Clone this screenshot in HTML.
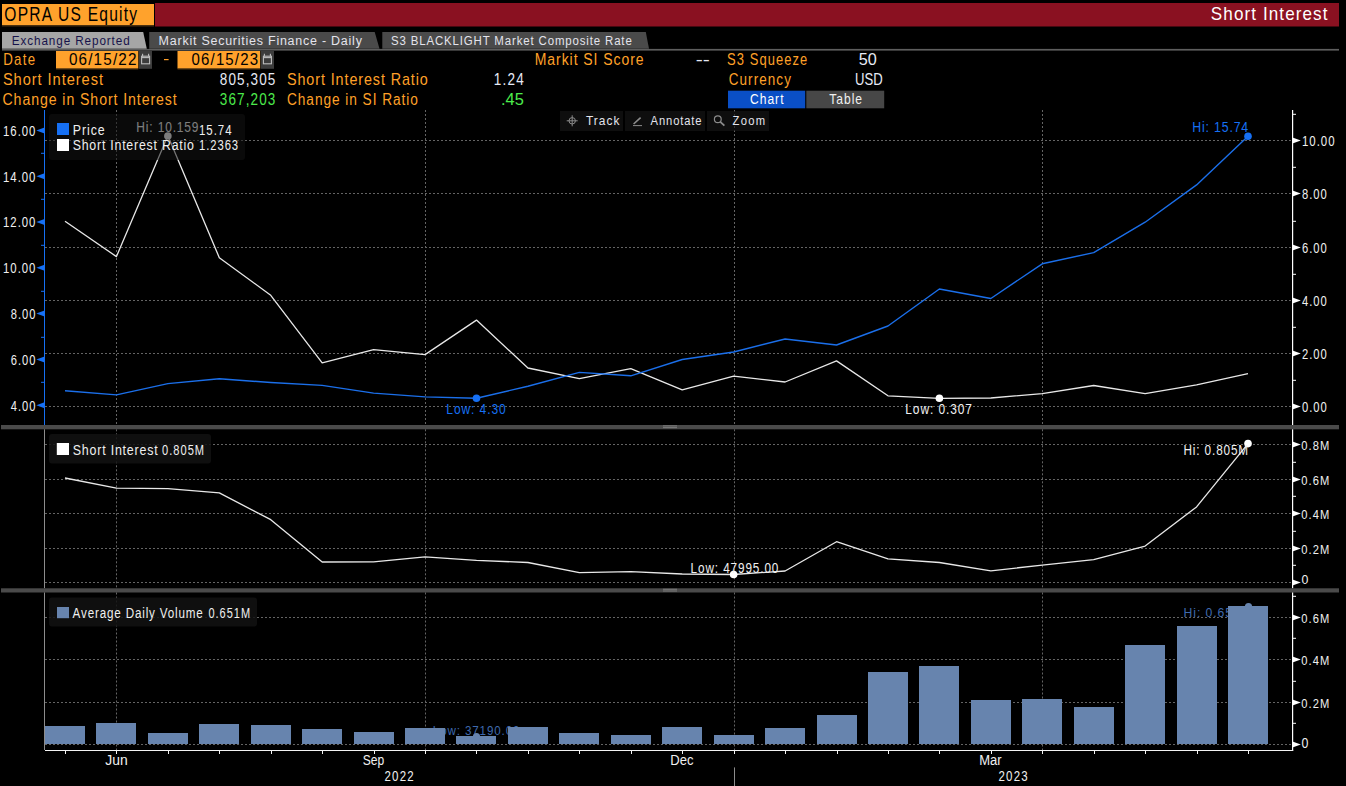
<!DOCTYPE html>
<html><head><meta charset="utf-8"><style>
html,body{margin:0;padding:0;background:#000;width:1346px;height:786px;overflow:hidden}
svg{display:block}
text{font-family:"Liberation Sans", sans-serif;white-space:pre}
</style></head><body>
<svg width="1346" height="786" viewBox="0 0 1346 786">
<rect width="1346" height="786" fill="#000"/>
<rect x="2.00" y="4.00" width="152.00" height="21.00" fill="#FFA22C" />
<rect x="2.00" y="25.00" width="152.00" height="1.50" fill="#4a3010" />
<rect x="155.00" y="3.00" width="1184.00" height="23.50" fill="#8A1121" />
<text transform="translate(4.30,20.80) scale(1,1.2785)" x="0" y="0" font-size="15.57" fill="#000" textLength="132.79" lengthAdjust="spacing" >OPRA US Equity</text>
<text transform="translate(1210.86,19.70) scale(1,1.1055)" x="0" y="0" font-size="17.09" fill="#FFFFFF" textLength="116.59" lengthAdjust="spacing" >Short Interest</text>
<polygon points="2,32 143.2,32 146.8,48.7 2,48.7" fill="#A6A6A6"/>
<polygon points="149.2,32 374.7,32 379.5,48.7 149.2,48.7" fill="#4A4A4A"/>
<polygon points="382.3,32 645.8,32 649,48.7 382.3,48.7" fill="#4A4A4A"/>
<rect x="2.00" y="48.90" width="1337.00" height="1.70" fill="#5E5E5E" />
<text transform="translate(11.82,44.90) scale(1,1.1521)" x="0" y="0" font-size="11.73" fill="#16124A" textLength="117.85" lengthAdjust="spacing" >Exchange Reported</text>
<text transform="translate(158.62,44.90) scale(1,1.0836)" x="0" y="0" font-size="12.48" fill="#E4E4EC" textLength="203.25" lengthAdjust="spacing" >Markit Securities Finance - Daily</text>
<text transform="translate(390.92,44.90) scale(1,1.1792)" x="0" y="0" font-size="11.46" fill="#E4E4EC" textLength="240.85" lengthAdjust="spacing" >S3 BLACKLIGHT Market Composite Rate</text>
<text transform="translate(3.20,64.70) scale(1,1.2031)" x="0" y="0" font-size="13.29" fill="#FFA028" textLength="31.90" lengthAdjust="spacing" >Date</text>
<rect x="56.00" y="51.00" width="82.30" height="17.60" fill="#FFA22C" />
<rect x="56.00" y="68.60" width="82.30" height="1.00" fill="#4a3010" />
<text transform="translate(68.90,64.70) scale(1,1.0462)" x="0" y="0" font-size="15.28" fill="#000" textLength="67.60" lengthAdjust="spacing" >06/15/22</text>
<rect x="139.00" y="51.00" width="13.00" height="17.80" fill="#3C3C3C" />
<rect x="164.00" y="59.00" width="4.60" height="1.20" fill="#FFA028" />
<rect x="177.50" y="51.00" width="82.70" height="17.60" fill="#FFA22C" />
<rect x="177.50" y="68.60" width="82.70" height="1.00" fill="#4a3010" />
<text transform="translate(191.60,64.70) scale(1,1.0651)" x="0" y="0" font-size="15.01" fill="#000" textLength="66.40" lengthAdjust="spacing" >06/15/23</text>
<rect x="260.80" y="51.00" width="13.20" height="17.80" fill="#3C3C3C" />
<g fill="none" stroke="#BDBDBD" stroke-width="1.1"><rect x="141.60" y="56.2" width="8" height="7.6"/><line x1="141.60" y1="57.6" x2="149.60" y2="57.6"/><line x1="142.60" y1="53.8" x2="142.60" y2="56.5"/><line x1="148.60" y1="53.8" x2="148.60" y2="56.5"/></g>
<g fill="none" stroke="#BDBDBD" stroke-width="1.1"><rect x="263.40" y="56.2" width="8" height="7.6"/><line x1="263.40" y1="57.6" x2="271.40" y2="57.6"/><line x1="264.40" y1="53.8" x2="264.40" y2="56.5"/><line x1="270.40" y1="53.8" x2="270.40" y2="56.5"/></g>
<text transform="translate(2.90,84.80) scale(1,1.0896)" x="0" y="0" font-size="14.67" fill="#FFA028" textLength="100.10" lengthAdjust="spacing" >Short Interest</text>
<text transform="translate(219.80,84.80) scale(1,1.1812)" x="0" y="0" font-size="13.54" fill="#E6EAF6" textLength="55.60" lengthAdjust="spacing" >805,305</text>
<text transform="translate(2.50,104.60) scale(1,1.1299)" x="0" y="0" font-size="14.15" fill="#FFA028" textLength="174.30" lengthAdjust="spacing" >Change in Short Interest</text>
<text transform="translate(219.80,104.60) scale(1,1.1812)" x="0" y="0" font-size="13.54" fill="#4CEB4C" textLength="55.60" lengthAdjust="spacing" >367,203</text>
<text transform="translate(287.00,84.80) scale(1,1.1117)" x="0" y="0" font-size="14.38" fill="#FFA028" textLength="140.80" lengthAdjust="spacing" >Short Interest Ratio</text>
<text transform="translate(493.80,84.80) scale(1,1.1788)" x="0" y="0" font-size="13.56" fill="#E6EAF6" textLength="30.00" lengthAdjust="spacing" >1.24</text>
<text transform="translate(287.00,104.60) scale(1,1.1651)" x="0" y="0" font-size="13.72" fill="#FFA028" textLength="130.90" lengthAdjust="spacing" >Change in SI Ratio</text>
<text x="501.00" y="104.60" font-size="15.99" fill="#4CEB4C" textLength="22.80" lengthAdjust="spacingAndGlyphs" >.45</text>
<text transform="translate(534.70,64.70) scale(1,1.1403)" x="0" y="0" font-size="14.02" fill="#FFA028" textLength="108.90" lengthAdjust="spacing" >Markit SI Score</text>
<text x="695.70" y="64.70" font-size="15.99" fill="#E6EAF6" textLength="14.10" lengthAdjust="spacingAndGlyphs" >--</text>
<text transform="translate(727.00,64.70) scale(1,1.2329)" x="0" y="0" font-size="12.97" fill="#FFA028" textLength="80.30" lengthAdjust="spacing" >S3 Squeeze</text>
<text x="858.80" y="64.70" font-size="15.99" fill="#E6EAF6" textLength="18.00" lengthAdjust="spacingAndGlyphs" >50</text>
<text transform="translate(728.70,84.80) scale(1,1.1850)" x="0" y="0" font-size="13.49" fill="#FFA028" textLength="62.20" lengthAdjust="spacing" >Currency</text>
<text x="855.00" y="84.80" font-size="15.99" fill="#E6EAF6" textLength="27.70" lengthAdjust="spacingAndGlyphs" >USD</text>
<rect x="728.00" y="90.70" width="77.20" height="17.60" fill="#0A4FC6" />
<rect x="806.30" y="90.70" width="77.90" height="17.60" fill="#474747" />
<text transform="translate(750.01,103.70) scale(1,1.1460)" x="0" y="0" font-size="12.05" fill="#FFFFFF" textLength="33.48" lengthAdjust="spacing" >Chart</text>
<text transform="translate(829.21,103.70) scale(1,1.1408)" x="0" y="0" font-size="12.10" fill="#F0F0F0" textLength="32.88" lengthAdjust="spacing" >Table</text>
<line x1="45" y1="140.5" x2="1292" y2="140.5" stroke="#646464" stroke-width="1" stroke-dasharray="2,2"/>
<line x1="45" y1="193.5" x2="1292" y2="193.5" stroke="#646464" stroke-width="1" stroke-dasharray="2,2"/>
<line x1="45" y1="247.5" x2="1292" y2="247.5" stroke="#646464" stroke-width="1" stroke-dasharray="2,2"/>
<line x1="45" y1="300.5" x2="1292" y2="300.5" stroke="#646464" stroke-width="1" stroke-dasharray="2,2"/>
<line x1="45" y1="353.5" x2="1292" y2="353.5" stroke="#646464" stroke-width="1" stroke-dasharray="2,2"/>
<line x1="45" y1="406.5" x2="1292" y2="406.5" stroke="#646464" stroke-width="1" stroke-dasharray="2,2"/>
<line x1="116.5" y1="110" x2="116.5" y2="425" stroke="#646464" stroke-width="1" stroke-dasharray="2,2"/>
<line x1="425.5" y1="110" x2="425.5" y2="425" stroke="#646464" stroke-width="1" stroke-dasharray="2,2"/>
<line x1="734.5" y1="110" x2="734.5" y2="425" stroke="#646464" stroke-width="1" stroke-dasharray="2,2"/>
<line x1="1042.5" y1="110" x2="1042.5" y2="425" stroke="#646464" stroke-width="1" stroke-dasharray="2,2"/>
<rect x="560.00" y="111.00" width="63.00" height="20.00" fill="#161616" fill-opacity="0.65"/>
<rect x="625.00" y="111.00" width="80.00" height="20.00" fill="#161616" fill-opacity="0.65"/>
<rect x="707.00" y="111.00" width="62.00" height="20.00" fill="#161616" fill-opacity="0.65"/>
<text transform="translate(586.02,125.10) scale(1,1.1460)" x="0" y="0" font-size="11.92" fill="#E4E4EC" textLength="33.37" lengthAdjust="spacing" >Track</text>
<text transform="translate(650.62,125.10) scale(1,1.2196)" x="0" y="0" font-size="11.20" fill="#E4E4EC" textLength="50.97" lengthAdjust="spacing" >Annotate</text>
<text transform="translate(732.52,125.10) scale(1,1.2149)" x="0" y="0" font-size="11.25" fill="#E4E4EC" textLength="32.67" lengthAdjust="spacing" >Zoom</text>
<g fill="none" stroke="#8C8C8C" stroke-width="1"><circle cx="572.2" cy="120.8" r="3.2"/><line x1="572.2" y1="115.3" x2="572.2" y2="126.3"/><line x1="566.7" y1="120.8" x2="577.7" y2="120.8"/><line x1="633.6" y1="124.0" x2="640.6" y2="117.6" stroke-width="1.6"/><line x1="633" y1="125.6" x2="642" y2="125.6"/><circle cx="717.8" cy="119.2" r="3.4" stroke-width="1.2"/><line x1="720.3" y1="121.8" x2="724.4" y2="125.6" stroke-width="1.8"/></g>
<polyline points="65.00,221.20 116.44,256.60 167.87,135.80 219.31,257.70 270.74,295.30 322.18,362.90 373.61,349.70 425.05,354.60 476.48,320.10 527.91,368.00 579.35,378.70 630.79,368.70 682.22,389.80 733.65,376.20 785.09,382.00 836.53,360.90 887.96,395.80 939.39,398.30 990.83,398.00 1042.27,393.60 1093.70,385.50 1145.13,393.70 1196.57,384.80 1248.01,373.60" fill="none" stroke="#E8E8E8" stroke-width="1.3" stroke-linejoin="round"/>
<polyline points="65.00,390.80 116.44,394.90 167.87,383.60 219.31,378.80 270.74,382.50 322.18,385.40 373.61,393.10 425.05,396.90 476.48,398.30 527.91,386.20 579.35,372.40 630.79,375.80 682.22,359.50 733.65,352.00 785.09,339.00 836.53,345.00 887.96,326.00 939.39,289.00 990.83,298.50 1042.27,263.80 1093.70,252.60 1145.13,222.20 1196.57,184.90 1248.01,136.30" fill="none" stroke="#1B6FEA" stroke-width="1.4" stroke-linejoin="round"/>
<circle cx="1248.01" cy="136.3" r="3.8" fill="#1670F4"/>
<circle cx="476.48" cy="398.3" r="3.8" fill="#1670F4"/>
<circle cx="939.39" cy="398.2" r="3.8" fill="#FFFFFF"/>
<circle cx="167.87" cy="136" r="3.8" fill="#FFFFFF"/>
<text transform="translate(1192.31,131.90) scale(1,1.1239)" x="0" y="0" font-size="12.29" fill="#1670F4" textLength="55.88" lengthAdjust="spacing" >Hi: 15.74</text>
<text transform="translate(446.31,413.60) scale(1,1.1459)" x="0" y="0" font-size="12.05" fill="#1670F4" textLength="59.38" lengthAdjust="spacing" >Low: 4.30</text>
<text transform="translate(905.31,413.80) scale(1,1.1513)" x="0" y="0" font-size="11.99" fill="#F2F2F2" textLength="66.68" lengthAdjust="spacing" >Low: 0.307</text>
<text transform="translate(136.31,131.80) scale(1,1.1503)" x="0" y="0" font-size="12.00" fill="#FFFFFF" textLength="62.18" lengthAdjust="spacing" >Hi: 10.159</text>
<rect x="49" y="114" width="196" height="46" rx="3" fill="#121212" fill-opacity="0.55"/>
<rect x="57.00" y="123.00" width="12.00" height="12.00" fill="#1670F4" />
<rect x="57.00" y="139.00" width="12.00" height="12.00" fill="#FFFFFF" />
<text transform="translate(72.70,134.60) scale(1,1.1291)" x="0" y="0" font-size="12.36" fill="#F0F0F0" textLength="32.00" lengthAdjust="spacing" >Price</text>
<text transform="translate(199.00,134.60) scale(1,1.2173)" x="0" y="0" font-size="11.46" fill="#F0F0F0" textLength="32.60" lengthAdjust="spacing" >15.74</text>
<text transform="translate(72.70,150.30) scale(1,1.1272)" x="0" y="0" font-size="12.38" fill="#F0F0F0" textLength="121.20" lengthAdjust="spacing" >Short Interest Ratio</text>
<text transform="translate(199.00,150.30) scale(1,1.2405)" x="0" y="0" font-size="11.25" fill="#F0F0F0" textLength="39.10" lengthAdjust="spacing" >1.2363</text>
<rect x="44.00" y="110.00" width="1.00" height="315.00" fill="#1670F4" />
<rect x="1292.00" y="110.00" width="1.20" height="315.00" fill="#FFFFFF" />
<polygon points="36.3,130.50 44.5,127.50 44.5,133.50" fill="#1670F4"/>
<text transform="translate(3.07,135.90) scale(1,1.2775)" x="0" y="0" font-size="11.38" fill="#F0F0F0" textLength="32.35" lengthAdjust="spacing" >16.00</text>
<rect x="41.00" y="152.80" width="3.00" height="1.00" fill="#1670F4" />
<polygon points="36.3,176.28 44.5,173.28 44.5,179.28" fill="#1670F4"/>
<text transform="translate(3.07,181.68) scale(1,1.2775)" x="0" y="0" font-size="11.38" fill="#F0F0F0" textLength="32.35" lengthAdjust="spacing" >14.00</text>
<rect x="41.00" y="198.80" width="3.00" height="1.00" fill="#1670F4" />
<polygon points="36.3,222.06 44.5,219.06 44.5,225.06" fill="#1670F4"/>
<text transform="translate(3.07,227.46) scale(1,1.2775)" x="0" y="0" font-size="11.38" fill="#F0F0F0" textLength="32.35" lengthAdjust="spacing" >12.00</text>
<rect x="41.00" y="244.80" width="3.00" height="1.00" fill="#1670F4" />
<polygon points="36.3,267.84 44.5,264.84 44.5,270.84" fill="#1670F4"/>
<text transform="translate(3.07,273.24) scale(1,1.2775)" x="0" y="0" font-size="11.38" fill="#F0F0F0" textLength="32.35" lengthAdjust="spacing" >10.00</text>
<rect x="41.00" y="290.80" width="3.00" height="1.00" fill="#1670F4" />
<polygon points="36.3,313.62 44.5,310.62 44.5,316.62" fill="#1670F4"/>
<text transform="translate(10.77,319.02) scale(1,1.3039)" x="0" y="0" font-size="11.15" fill="#F0F0F0" textLength="24.65" lengthAdjust="spacing" >8.00</text>
<rect x="41.00" y="336.80" width="3.00" height="1.00" fill="#1670F4" />
<polygon points="36.3,359.40 44.5,356.40 44.5,362.40" fill="#1670F4"/>
<text transform="translate(10.77,364.80) scale(1,1.3039)" x="0" y="0" font-size="11.15" fill="#F0F0F0" textLength="24.65" lengthAdjust="spacing" >6.00</text>
<rect x="41.00" y="381.80" width="3.00" height="1.00" fill="#1670F4" />
<polygon points="36.3,405.18 44.5,402.18 44.5,408.18" fill="#1670F4"/>
<text transform="translate(10.77,410.58) scale(1,1.3039)" x="0" y="0" font-size="11.15" fill="#F0F0F0" textLength="24.65" lengthAdjust="spacing" >4.00</text>
<polygon points="1300.8,140.50 1292.5,137.50 1292.5,143.50" fill="#FFFFFF"/>
<text transform="translate(1301.99,145.90) scale(1,1.2416)" x="0" y="0" font-size="11.47" fill="#F0F0F0" textLength="32.62" lengthAdjust="spacing" >10.00</text>
<rect x="1293.00" y="113.80" width="3.00" height="1.00" fill="#FFFFFF" />
<polygon points="1300.8,193.50 1292.5,190.50 1292.5,196.50" fill="#FFFFFF"/>
<text transform="translate(1301.99,198.90) scale(1,1.2691)" x="0" y="0" font-size="11.22" fill="#F0F0F0" textLength="24.82" lengthAdjust="spacing" >8.00</text>
<rect x="1293.00" y="166.80" width="3.00" height="1.00" fill="#FFFFFF" />
<polygon points="1300.8,247.50 1292.5,244.50 1292.5,250.50" fill="#FFFFFF"/>
<text transform="translate(1301.99,252.90) scale(1,1.2691)" x="0" y="0" font-size="11.22" fill="#F0F0F0" textLength="24.82" lengthAdjust="spacing" >6.00</text>
<rect x="1293.00" y="220.80" width="3.00" height="1.00" fill="#FFFFFF" />
<polygon points="1300.8,300.50 1292.5,297.50 1292.5,303.50" fill="#FFFFFF"/>
<text transform="translate(1301.99,305.90) scale(1,1.2691)" x="0" y="0" font-size="11.22" fill="#F0F0F0" textLength="24.82" lengthAdjust="spacing" >4.00</text>
<rect x="1293.00" y="273.80" width="3.00" height="1.00" fill="#FFFFFF" />
<polygon points="1300.8,353.50 1292.5,350.50 1292.5,356.50" fill="#FFFFFF"/>
<text transform="translate(1301.99,358.90) scale(1,1.2691)" x="0" y="0" font-size="11.22" fill="#F0F0F0" textLength="24.82" lengthAdjust="spacing" >2.00</text>
<rect x="1293.00" y="326.80" width="3.00" height="1.00" fill="#FFFFFF" />
<polygon points="1300.8,406.50 1292.5,403.50 1292.5,409.50" fill="#FFFFFF"/>
<text transform="translate(1301.99,411.90) scale(1,1.2691)" x="0" y="0" font-size="11.22" fill="#F0F0F0" textLength="24.82" lengthAdjust="spacing" >0.00</text>
<rect x="1293.00" y="379.80" width="3.00" height="1.00" fill="#FFFFFF" />
<rect x="1.00" y="425.00" width="1338.00" height="4.30" fill="#4A4A4A" />
<rect x="663.00" y="425.50" width="14.00" height="0.80" fill="#8A8A8A" />
<rect x="663.00" y="427.30" width="14.00" height="0.80" fill="#8A8A8A" />
<line x1="45" y1="582.5" x2="1292" y2="582.5" stroke="#646464" stroke-width="1" stroke-dasharray="2,2"/>
<line x1="45" y1="548.5" x2="1292" y2="548.5" stroke="#646464" stroke-width="1" stroke-dasharray="2,2"/>
<line x1="45" y1="513.5" x2="1292" y2="513.5" stroke="#646464" stroke-width="1" stroke-dasharray="2,2"/>
<line x1="45" y1="479.5" x2="1292" y2="479.5" stroke="#646464" stroke-width="1" stroke-dasharray="2,2"/>
<line x1="45" y1="444.5" x2="1292" y2="444.5" stroke="#646464" stroke-width="1" stroke-dasharray="2,2"/>
<line x1="116.5" y1="429.3" x2="116.5" y2="588.3" stroke="#646464" stroke-width="1" stroke-dasharray="2,2"/>
<line x1="425.5" y1="429.3" x2="425.5" y2="588.3" stroke="#646464" stroke-width="1" stroke-dasharray="2,2"/>
<line x1="734.5" y1="429.3" x2="734.5" y2="588.3" stroke="#646464" stroke-width="1" stroke-dasharray="2,2"/>
<line x1="1042.5" y1="429.3" x2="1042.5" y2="588.3" stroke="#646464" stroke-width="1" stroke-dasharray="2,2"/>
<rect x="49" y="434" width="162" height="29.4" rx="3" fill="#121212" fill-opacity="0.85"/>
<rect x="56.80" y="443.00" width="12.20" height="12.00" fill="#FFFFFF" />
<text transform="translate(72.70,454.70) scale(1,1.1199)" x="0" y="0" font-size="12.46" fill="#F0F0F0" textLength="85.00" lengthAdjust="spacing" >Short Interest</text>
<text transform="translate(162.10,454.70) scale(1,1.2594)" x="0" y="0" font-size="11.08" fill="#F0F0F0" textLength="42.00" lengthAdjust="spacing" >0.805M</text>
<polyline points="65.00,478.00 116.44,488.10 167.87,488.60 219.31,492.90 270.74,519.70 322.18,562.00 373.61,561.90 425.05,556.80 476.48,560.40 527.91,562.50 579.35,572.60 630.79,571.70 682.22,574.00 733.65,574.50 785.09,571.00 836.53,541.70 887.96,558.90 939.39,562.50 990.83,570.80 1042.27,565.10 1093.70,559.70 1145.13,546.10 1196.57,506.90 1248.01,443.60" fill="none" stroke="#E8E8E8" stroke-width="1.3" stroke-linejoin="round"/>
<circle cx="1248.01" cy="443.6" r="3.8" fill="#FFFFFF"/>
<circle cx="733.65" cy="574.5" r="3.8" fill="#FFFFFF"/>
<text transform="translate(1183.51,455.30) scale(1,1.1730)" x="0" y="0" font-size="11.77" fill="#F0F0F0" textLength="64.68" lengthAdjust="spacing" >Hi: 0.805M</text>
<text transform="translate(690.61,573.40) scale(1,1.1728)" x="0" y="0" font-size="11.77" fill="#F0F0F0" textLength="87.78" lengthAdjust="spacing" >Low: 47995.00</text>
<rect x="44.00" y="429.30" width="1.00" height="159.00" fill="#8C8C8C" />
<rect x="1292.00" y="429.30" width="1.20" height="159.00" fill="#FFFFFF" />
<polygon points="1300.8,582.50 1292.5,579.50 1292.5,585.50" fill="#FFFFFF"/>
<text x="1301.62" y="583.70" font-size="13.66" fill="#F0F0F0" textLength="6.87" lengthAdjust="spacingAndGlyphs" >0</text>
<rect x="1293.00" y="564.80" width="3.00" height="1.00" fill="#FFFFFF" />
<polygon points="1300.8,548.50 1292.5,545.50 1292.5,551.50" fill="#FFFFFF"/>
<text transform="translate(1301.22,553.60) scale(1,1.2255)" x="0" y="0" font-size="11.15" fill="#F0F0F0" textLength="28.17" lengthAdjust="spacing" >0.2M</text>
<rect x="1293.00" y="530.80" width="3.00" height="1.00" fill="#FFFFFF" />
<polygon points="1300.8,513.50 1292.5,510.50 1292.5,516.50" fill="#FFFFFF"/>
<text transform="translate(1301.22,518.60) scale(1,1.2255)" x="0" y="0" font-size="11.15" fill="#F0F0F0" textLength="28.17" lengthAdjust="spacing" >0.4M</text>
<rect x="1293.00" y="495.80" width="3.00" height="1.00" fill="#FFFFFF" />
<polygon points="1300.8,479.50 1292.5,476.50 1292.5,482.50" fill="#FFFFFF"/>
<text transform="translate(1301.22,484.60) scale(1,1.2255)" x="0" y="0" font-size="11.15" fill="#F0F0F0" textLength="28.17" lengthAdjust="spacing" >0.6M</text>
<rect x="1293.00" y="461.80" width="3.00" height="1.00" fill="#FFFFFF" />
<polygon points="1300.8,444.50 1292.5,441.50 1292.5,447.50" fill="#FFFFFF"/>
<text transform="translate(1301.22,449.60) scale(1,1.2255)" x="0" y="0" font-size="11.15" fill="#F0F0F0" textLength="28.17" lengthAdjust="spacing" >0.8M</text>
<rect x="1.00" y="588.30" width="1338.00" height="4.20" fill="#4A4A4A" />
<rect x="663.00" y="588.80" width="14.00" height="0.80" fill="#8A8A8A" />
<rect x="663.00" y="590.60" width="14.00" height="0.80" fill="#8A8A8A" />
<line x1="45" y1="744.5" x2="1292" y2="744.5" stroke="#646464" stroke-width="1" stroke-dasharray="2,2"/>
<line x1="45" y1="702.5" x2="1292" y2="702.5" stroke="#646464" stroke-width="1" stroke-dasharray="2,2"/>
<line x1="45" y1="659.5" x2="1292" y2="659.5" stroke="#646464" stroke-width="1" stroke-dasharray="2,2"/>
<line x1="45" y1="617.5" x2="1292" y2="617.5" stroke="#646464" stroke-width="1" stroke-dasharray="2,2"/>
<line x1="116.5" y1="592.5" x2="116.5" y2="750" stroke="#646464" stroke-width="1" stroke-dasharray="2,2"/>
<line x1="425.5" y1="592.5" x2="425.5" y2="750" stroke="#646464" stroke-width="1" stroke-dasharray="2,2"/>
<line x1="734.5" y1="592.5" x2="734.5" y2="750" stroke="#646464" stroke-width="1" stroke-dasharray="2,2"/>
<line x1="1042.5" y1="592.5" x2="1042.5" y2="750" stroke="#646464" stroke-width="1" stroke-dasharray="2,2"/>
<text transform="translate(432.82,735.30) scale(1,1.1754)" x="0" y="0" font-size="11.62" fill="#3F6AAE" textLength="86.67" lengthAdjust="spacing" >Low: 37190.00</text>
<text transform="translate(1183.62,617.40) scale(1,1.1194)" x="0" y="0" font-size="12.21" fill="#3F6AAE" textLength="67.07" lengthAdjust="spacing" >Hi: 0.651M</text>
<rect x="45.00" y="726.00" width="40.00" height="18.00" fill="#6784AE" />
<rect x="96.00" y="723.00" width="40.00" height="21.00" fill="#6784AE" />
<rect x="148.00" y="733.00" width="40.00" height="11.00" fill="#6784AE" />
<rect x="199.00" y="724.00" width="40.00" height="20.00" fill="#6784AE" />
<rect x="251.00" y="725.00" width="40.00" height="19.00" fill="#6784AE" />
<rect x="302.00" y="729.00" width="40.00" height="15.00" fill="#6784AE" />
<rect x="354.00" y="732.00" width="40.00" height="12.00" fill="#6784AE" />
<rect x="405.00" y="728.00" width="40.00" height="16.00" fill="#6784AE" />
<rect x="456.00" y="736.00" width="40.00" height="8.00" fill="#6784AE" />
<rect x="508.00" y="727.00" width="40.00" height="17.00" fill="#6784AE" />
<rect x="559.00" y="733.00" width="40.00" height="11.00" fill="#6784AE" />
<rect x="611.00" y="735.00" width="40.00" height="9.00" fill="#6784AE" />
<rect x="662.00" y="727.00" width="40.00" height="17.00" fill="#6784AE" />
<rect x="714.00" y="735.00" width="40.00" height="9.00" fill="#6784AE" />
<rect x="765.00" y="728.00" width="40.00" height="16.00" fill="#6784AE" />
<rect x="817.00" y="715.00" width="40.00" height="29.00" fill="#6784AE" />
<rect x="868.00" y="672.00" width="40.00" height="72.00" fill="#6784AE" />
<rect x="919.00" y="666.00" width="40.00" height="78.00" fill="#6784AE" />
<rect x="971.00" y="700.00" width="40.00" height="44.00" fill="#6784AE" />
<rect x="1022.00" y="699.00" width="40.00" height="45.00" fill="#6784AE" />
<rect x="1074.00" y="707.00" width="40.00" height="37.00" fill="#6784AE" />
<rect x="1125.00" y="645.00" width="40.00" height="99.00" fill="#6784AE" />
<rect x="1177.00" y="626.00" width="40.00" height="118.00" fill="#6784AE" />
<rect x="1228.00" y="606.00" width="40.00" height="138.00" fill="#6784AE" />
<circle cx="1248.5" cy="606.5" r="3.6" fill="#6784AE"/>
<circle cx="476.5" cy="736.5" r="3.6" fill="#6784AE"/>
<line x1="45" y1="744.5" x2="1292" y2="744.5" stroke="#646464" stroke-width="1" stroke-dasharray="2,2"/>
<rect x="49" y="597.4" width="208" height="29.2" rx="3" fill="#121212" fill-opacity="0.85"/>
<rect x="57.00" y="607.00" width="12.00" height="11.20" fill="#6784AE" />
<text transform="translate(72.60,617.80) scale(1,1.1960)" x="0" y="0" font-size="11.67" fill="#F0F0F0" textLength="130.20" lengthAdjust="spacing" >Average Daily Volume</text>
<text transform="translate(208.40,617.80) scale(1,1.2684)" x="0" y="0" font-size="11.00" fill="#F0F0F0" textLength="41.70" lengthAdjust="spacing" >0.651M</text>
<rect x="44.00" y="592.50" width="1.00" height="157.50" fill="#8C8C8C" />
<rect x="1292.00" y="592.50" width="1.20" height="158.50" fill="#FFFFFF" />
<polygon points="1300.8,744.50 1292.5,741.50 1292.5,747.50" fill="#FFFFFF"/>
<text x="1301.60" y="747.80" font-size="13.95" fill="#F0F0F0" textLength="6.90" lengthAdjust="spacingAndGlyphs" >0</text>
<rect x="1293.00" y="722.80" width="3.00" height="1.00" fill="#FFFFFF" />
<polygon points="1300.8,702.50 1292.5,699.50 1292.5,705.50" fill="#FFFFFF"/>
<text transform="translate(1301.22,707.60) scale(1,1.2255)" x="0" y="0" font-size="11.15" fill="#F0F0F0" textLength="28.17" lengthAdjust="spacing" >0.2M</text>
<rect x="1293.00" y="680.80" width="3.00" height="1.00" fill="#FFFFFF" />
<polygon points="1300.8,659.50 1292.5,656.50 1292.5,662.50" fill="#FFFFFF"/>
<text transform="translate(1301.22,664.60) scale(1,1.2255)" x="0" y="0" font-size="11.15" fill="#F0F0F0" textLength="28.17" lengthAdjust="spacing" >0.4M</text>
<rect x="1293.00" y="637.80" width="3.00" height="1.00" fill="#FFFFFF" />
<polygon points="1300.8,617.50 1292.5,614.50 1292.5,620.50" fill="#FFFFFF"/>
<text transform="translate(1301.22,622.60) scale(1,1.2255)" x="0" y="0" font-size="11.15" fill="#F0F0F0" textLength="28.17" lengthAdjust="spacing" >0.6M</text>
<rect x="1293.00" y="595.80" width="3.00" height="1.00" fill="#FFFFFF" />
<rect x="45.00" y="750.00" width="1248.20" height="1.00" fill="#F4F4F4" />
<rect x="65.00" y="751.00" width="1.00" height="3.00" fill="#F4F4F4" />
<rect x="116.00" y="751.00" width="1.00" height="3.00" fill="#F4F4F4" />
<rect x="168.00" y="751.00" width="1.00" height="3.00" fill="#F4F4F4" />
<rect x="219.00" y="751.00" width="1.00" height="3.00" fill="#F4F4F4" />
<rect x="271.00" y="751.00" width="1.00" height="3.00" fill="#F4F4F4" />
<rect x="322.00" y="751.00" width="1.00" height="3.00" fill="#F4F4F4" />
<rect x="374.00" y="751.00" width="1.00" height="3.00" fill="#F4F4F4" />
<rect x="425.00" y="751.00" width="1.00" height="3.00" fill="#F4F4F4" />
<rect x="476.00" y="751.00" width="1.00" height="3.00" fill="#F4F4F4" />
<rect x="528.00" y="751.00" width="1.00" height="3.00" fill="#F4F4F4" />
<rect x="579.00" y="751.00" width="1.00" height="3.00" fill="#F4F4F4" />
<rect x="631.00" y="751.00" width="1.00" height="3.00" fill="#F4F4F4" />
<rect x="682.00" y="751.00" width="1.00" height="3.00" fill="#F4F4F4" />
<rect x="734.00" y="751.00" width="1.00" height="3.00" fill="#F4F4F4" />
<rect x="785.00" y="751.00" width="1.00" height="3.00" fill="#F4F4F4" />
<rect x="837.00" y="751.00" width="1.00" height="3.00" fill="#F4F4F4" />
<rect x="888.00" y="751.00" width="1.00" height="3.00" fill="#F4F4F4" />
<rect x="939.00" y="751.00" width="1.00" height="3.00" fill="#F4F4F4" />
<rect x="991.00" y="751.00" width="1.00" height="3.00" fill="#F4F4F4" />
<rect x="1042.00" y="751.00" width="1.00" height="3.00" fill="#F4F4F4" />
<rect x="1094.00" y="751.00" width="1.00" height="3.00" fill="#F4F4F4" />
<rect x="1145.00" y="751.00" width="1.00" height="3.00" fill="#F4F4F4" />
<rect x="1197.00" y="751.00" width="1.00" height="3.00" fill="#F4F4F4" />
<rect x="1248.00" y="751.00" width="1.00" height="3.00" fill="#F4F4F4" />
<text x="105.24" y="765.10" font-size="13.81" fill="#F0F0F0" textLength="22.38" lengthAdjust="spacingAndGlyphs" >Jun</text>
<text x="362.71" y="765.10" font-size="13.81" fill="#F0F0F0" textLength="21.48" lengthAdjust="spacingAndGlyphs" >Sep</text>
<text x="670.31" y="765.10" font-size="13.81" fill="#F0F0F0" textLength="23.18" lengthAdjust="spacingAndGlyphs" >Dec</text>
<text x="979.31" y="765.10" font-size="13.81" fill="#F0F0F0" textLength="22.38" lengthAdjust="spacingAndGlyphs" >Mar</text>
<text transform="translate(384.51,780.80) scale(1,1.2003)" x="0" y="0" font-size="11.50" fill="#F0F0F0" textLength="29.08" lengthAdjust="spacing" >2022</text>
<text transform="translate(998.51,780.80) scale(1,1.2003)" x="0" y="0" font-size="11.50" fill="#F0F0F0" textLength="29.08" lengthAdjust="spacing" >2023</text>
<rect x="734.00" y="767.40" width="1.00" height="18.60" fill="#8C8C8C" />
</svg></body></html>
